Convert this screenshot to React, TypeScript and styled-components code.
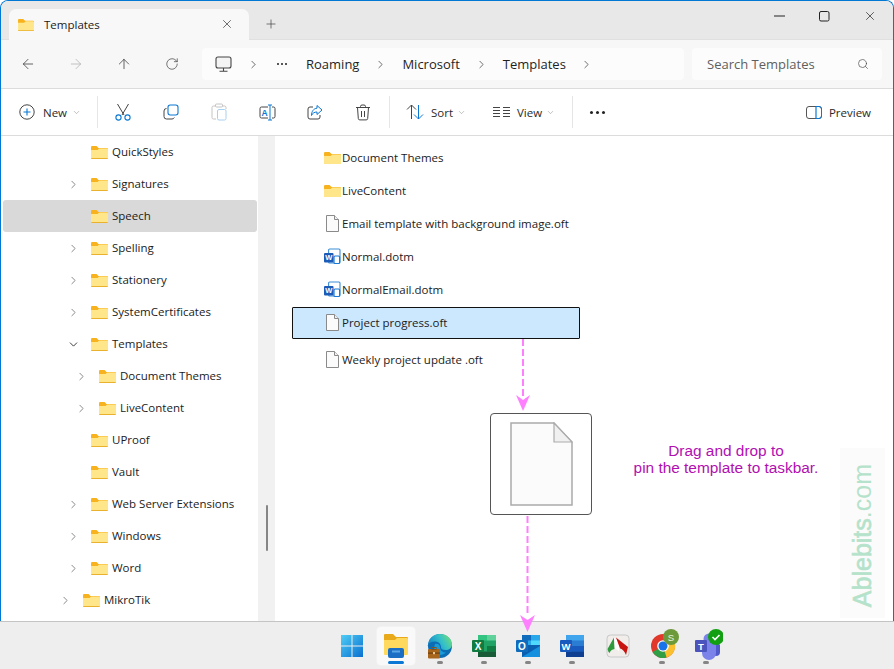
import React from "react";
import styled, { createGlobalStyle } from "styled-components";
import {
  ArrowLeft, ArrowRight, ArrowUp, RotateCw, ChevronRight, ChevronDown, X, Plus, Search,
} from "lucide-react";

const Global = createGlobalStyle`
  html, body { margin: 0; padding: 0; background: #fff; }
  body { font-family: "Open Sans", "Noto Sans", sans-serif; font-size: 11.5px; color: #1b1b1b; }
  * { box-sizing: border-box; }
`;

const Page = styled.div`
  position: relative;
  width: 894px;
  height: 669px;
  overflow: hidden;
  background: #fff;
`;
const Win = styled.div`
  height: 621px;
  display: flex;
  flex-direction: column;
  border: 1px solid #0078d4;
  border-bottom: 0;
  border-radius: 8px 8px 0 0;
  overflow: hidden;
`;
const TabStrip = styled.div`
  height: 39px;
  flex: none;
  background: #e8e8e8;
  display: flex;
  align-items: flex-end;
  padding-left: 8px;
  border-bottom: 1px solid #e0e0e0;
`;
const Tab = styled.div`
  width: 240px;
  height: 31px;
  background: #f8f8f8;
  border-radius: 7px 7px 0 0;
  display: flex;
  align-items: center;
  padding-left: 9px;
  margin-bottom: -1px;
  font-size: 11.5px;
`;
const TabTitle = styled.span`
  margin-left: 10px;
  flex: 1;
`;
const TabClose = styled.span`
  display: flex;
  margin-right: 15px;
  margin-top: -2px;
  color: #333;
`;
const NewTab = styled.div`
  margin-left: 15px;
  height: 31px;
  display: flex;
  align-items: center;
  color: #444;
`;
const WinControls = styled.div`
  margin-left: auto;
  align-self: flex-start;
  display: flex;
  padding: 7px 0 0 0;
`;
const WinBtn = styled.div`
  width: 45.5px;
  height: 16px;
  display: flex;
  align-items: center;
  justify-content: center;
`;
const AddressBar = styled.div`
  height: 49px;
  flex: none;
  background: #f7f7f7;
  border-bottom: 1px solid #dcdcdc;
  display: flex;
  align-items: center;
  padding-left: 3px;
`;
const NavBtn = styled.div<{ $off?: boolean }>`
  width: 48px;
  height: 32px;
  display: flex;
  align-items: center;
  justify-content: center;
  color: ${(p) => (p.$off ? "#b4b4b4" : "#404040")};
`;
const Crumbs = styled.div`
  margin-left: 6px;
  width: 482px;
  height: 32px;
  background: #fcfcfc;
  border-radius: 4px;
  display: flex;
  align-items: center;
  padding-left: 13px;
  font-size: 13px;
  color: #1f1f1f;
`;
const CrumbSep = styled.span<{ $w: number }>`
  width: ${(p) => p.$w}px;
  display: flex;
  justify-content: center;
  color: #444;
`;
const CrumbDots = styled.span`
  width: 14px;
  display: flex;
  justify-content: center;
  gap: 2px;
  margin-right: 17px;
`;
const Dot = styled.i<{ $s?: number }>`
  display: block;
  width: ${(p) => p.$s ?? 2}px;
  height: ${(p) => p.$s ?? 2}px;
  background: #222;
  border-radius: 50%;
`;
const SearchBox = styled.div`
  margin-left: 8px;
  width: 190px;
  height: 32px;
  background: #fcfcfc;
  border-radius: 4px;
  display: flex;
  align-items: center;
  justify-content: space-between;
  padding: 0 13px 0 15px;
  font-size: 13px;
  color: #5f5f5f;
`;
const Toolbar = styled.div`
  height: 47px;
  flex: none;
  background: #fff;
  border-bottom: 1px solid #dcdcdc;
  display: flex;
  align-items: center;
  font-size: 11.5px;
  color: #2a2a2a;
`;
const LabelBtn = styled.div<{ $w: number; $pl: number; $gap: number }>`
  width: ${(p) => p.$w}px;
  padding-left: ${(p) => p.$pl}px;
  height: 32px;
  display: flex;
  align-items: center;
  gap: ${(p) => p.$gap}px;
`;
const Caret = styled.span`
  display: flex;
  color: #8a8a8a;
  margin-left: -3px;
`;
const ToolSep = styled.div<{ $ml?: number; $mr?: number }>`
  width: 1px;
  height: 32px;
  background: #e6e6e6;
  margin-left: ${(p) => p.$ml ?? 0}px;
  margin-right: ${(p) => p.$mr ?? 0}px;
`;
const ToolIcon = styled.div`
  width: 48px;
  height: 32px;
  display: flex;
  align-items: center;
  justify-content: center;
`;
const More = styled.div`
  width: 48px;
  display: flex;
  justify-content: center;
  gap: 3px;
`;
const Preview = styled.div`
  margin-left: auto;
  padding-right: 22px;
  display: flex;
  align-items: center;
  gap: 7px;
`;
const Main = styled.div`
  flex: 1;
  min-height: 0;
  display: flex;
`;
const Tree = styled.div`
  width: 257px;
  flex: none;
  overflow: hidden;
`;
const TreeRow = styled.div<{ $depth: number; $sel?: boolean }>`
  height: 32px;
  margin: 0 1px 0 2px;
  padding-left: ${(p) => 52 + 8 * p.$depth}px;
  border-radius: 3px;
  background: ${(p) => (p.$sel ? "#d9d9d9" : "transparent")};
  display: flex;
  align-items: center;
`;
const Twisty = styled.span`
  width: 20px;
  margin-right: 8px;
  display: flex;
  justify-content: center;
  color: #777;
`;
const TwistyOpen = styled(Twisty)`
  color: #222;
`;
const TreeLabel = styled.span`
  margin-left: 4px;
  padding-bottom: 2px;
`;
const Track = styled.div`
  width: 17px;
  flex: none;
  background: #f1f1f1;
  padding-top: 369px;
  display: flex;
  justify-content: center;
`;
const Thumb = styled.div`
  width: 2px;
  height: 46px;
  background: #858585;
  border-radius: 1px;
`;
const Files = styled.div`
  flex: 1;
  padding: 5px 0 0 17px;
`;
const FileRow = styled.div<{ $sel?: boolean }>`
  width: 288px;
  height: ${(p) => (p.$sel ? 32 : 33)}px;
  padding-left: ${(p) => (p.$sel ? 30 : 31)}px;
  display: flex;
  align-items: center;
  ${(p) =>
    p.$sel
      ? `background:#cce8ff;border:1px solid #111;border-radius:1px;margin:1px 0 4px;padding-bottom:1px;`
      : ""}
`;
const FileIconSlot = styled.span`
  width: 19px;
  flex: none;
  display: flex;
  padding-right: 1px;
  justify-content: center;
`;
const Taskbar = styled.div`
  height: 48px;
  background: #eeeeee;
  border-top: 1px solid #c4c4c4;
  display: flex;
  align-items: center;
  padding-left: 330px;
`;
const TaskItem = styled.div<{ $active?: boolean; $shift?: number }>`
  position: relative;
  width: ${(p) => (p.$active ? 38 : 44)}px;
  height: 38px;
  margin: ${(p) => (p.$active ? "0 3px" : "0")};
  margin-left: ${(p) => (p.$shift !== undefined ? `${p.$shift}px` : undefined)};
  display: flex;
  align-items: center;
  justify-content: center;
  border-radius: 4px;
  ${(p) => (p.$active ? "background:#f9f9f9;box-shadow:0 0 0 1px #f2f2f2;" : "")}
`;
const Pip = styled.i<{ $active?: boolean }>`
  position: absolute;
  left: 50%;
  bottom: 1px;
  transform: translateX(-50%);
  width: ${(p) => (p.$active ? 16 : 6)}px;
  height: 3px;
  border-radius: 2px;
  background: ${(p) => (p.$active ? "#0a78d4" : "#858585")};
`;
const Arrows = styled.svg`
  position: absolute;
  left: 0;
  top: 0;
  pointer-events: none;
`;
const DragBox = styled.div`
  position: absolute;
  left: 490px;
  top: 413px;
  width: 102px;
  height: 102px;
  background: #fff;
  border: 1px solid #555;
  border-radius: 4px;
  display: flex;
  align-items: center;
  justify-content: center;
`;
const Note = styled.div`
  position: absolute;
  left: 606px;
  top: 442px;
  width: 240px;
  text-align: center;
  font: 15.4px/17px "Liberation Sans", Arial, sans-serif;
  color: #b10fb1;
`;
const Mark = styled.div`
  position: absolute;
  left: 840px;
  top: 448px;
  width: 45px;
  height: 170px;
  background: #fbfbfb;
  display: flex;
  align-items: center;
  justify-content: center;
`;
const MarkText = styled.span`
  writing-mode: vertical-rl;
  transform: rotate(180deg);
  font: 25px/1 "Liberation Sans", Arial, sans-serif;
  color: #b5e2ca;
  margin-top: 5px;
`;
const MarkBold = styled.b`
  font-weight: 400;
  -webkit-text-stroke: 0.6px #b5e2ca;
`;

const Folder = ({ w = 17 }: { w?: number }) => (
  <svg width={w} height={w * 0.82} viewBox="0 0 17 14">
    <path d="M0 2a1 1 0 0 1 1-1h4.500l2 2H16a1 1 0 0 1 1 1v2H0z" fill="#f7b21d" />
    <path d="M0 5h6.500l1.700-1.500H16a1 1 0 0 1 1 1V13a1 1 0 0 1-1 1H1a1 1 0 0 1-1-1z" fill="#ffe68a" />
    <path d="M0 13h17a1 1 0 0 1-1 1H1a1 1 0 0 1-1-1z" fill="#e9b12c" />
  </svg>
);
const DocIcon = () => (
  <svg width="13" height="17" viewBox="0 0 13 17">
    <path d="M.5.5h8l4 4v12H.5z" fill="#fbfbfb" stroke="#8a8a8a" />
    <path d="M8.500.5v4h4" fill="#f0f0f0" stroke="#8a8a8a" />
  </svg>
);
const WordDoc = () => (
  <svg width="17" height="17" viewBox="0 0 17 17">
    <rect x="4.600" y="1" width="11.400" height="14" rx="1" fill="#fff" stroke="#3b8ed6" strokeWidth="1.100" />
    <rect x="10" y="8" width="5.600" height="7.500" rx="1" fill="#fff" stroke="#1a7ad4" strokeWidth="1.200" />
    <rect x="0" y="5" width="9.500" height="9.500" rx="1" fill="#1c5cb8" />
    <text x="4.700" y="12.400" textAnchor="middle" fontSize="7.500" fontWeight="700" fontFamily="Liberation Sans" fill="#fff">W</text>
  </svg>
);

const tree: { n: string; d: number; t?: "c" | "o"; sel?: boolean }[] = [
  { n: "QuickStyles", d: 1 },
  { n: "Signatures", d: 1, t: "c" },
  { n: "Speech", d: 1, sel: true },
  { n: "Spelling", d: 1, t: "c" },
  { n: "Stationery", d: 1, t: "c" },
  { n: "SystemCertificates", d: 1, t: "c" },
  { n: "Templates", d: 1, t: "o" },
  { n: "Document Themes", d: 2, t: "c" },
  { n: "LiveContent", d: 2, t: "c" },
  { n: "UProof", d: 1 },
  { n: "Vault", d: 1 },
  { n: "Web Server Extensions", d: 1, t: "c" },
  { n: "Windows", d: 1, t: "c" },
  { n: "Word", d: 1, t: "c" },
  { n: "MikroTik", d: 0, t: "c" },
];
const files: { n: string; k: "f" | "d" | "w"; sel?: boolean }[] = [
  { n: "Document Themes", k: "f" },
  { n: "LiveContent", k: "f" },
  { n: "Email template with background image.oft", k: "d" },
  { n: "Normal.dotm", k: "w" },
  { n: "NormalEmail.dotm", k: "w" },
  { n: "Project progress.oft", k: "d", sel: true },
  { n: "Weekly project update .oft", k: "d" },
];

const Sep = ({ w }: { w: number }) => (
  <CrumbSep $w={w}><ChevronRight size={13} strokeWidth={1.4} /></CrumbSep>
);

export default function App() {
  return (
    <Page>
      <Global />
      <Win>
        <TabStrip>
          <Tab>
            <Folder w={16} />
            <TabTitle>Templates</TabTitle>
            <TabClose><X size={14} strokeWidth={1.2} /></TabClose>
          </Tab>
          <NewTab><Plus size={14} strokeWidth={1.2} /></NewTab>
          <WinControls>
            <WinBtn><svg width="11" height="2"><rect width="11" height="1" y="0.5" fill="#222" /></svg></WinBtn>
            <WinBtn><svg width="11" height="11"><rect x=".5" y=".5" width="9.500" height="9.500" rx="1.500" fill="none" stroke="#222" /></svg></WinBtn>
            <WinBtn><X size={14} strokeWidth={1.2} color="#222" /></WinBtn>
          </WinControls>
        </TabStrip>
        <AddressBar>
          <NavBtn><ArrowLeft size={16} strokeWidth={1.2} /></NavBtn>
          <NavBtn $off><ArrowRight size={16} strokeWidth={1.2} /></NavBtn>
          <NavBtn><ArrowUp size={16} strokeWidth={1.2} /></NavBtn>
          <NavBtn><RotateCw size={14} strokeWidth={1.2} /></NavBtn>
          <Crumbs>
            <svg width="17" height="17" viewBox="0 0 17 17">
              <rect x="1" y="1" width="15" height="11" rx="2" fill="#f4f4f4" stroke="#444" strokeWidth="1.100" />
              <path d="M8.500 12v3M4.500 15.200h8" stroke="#444" strokeWidth="1.100" />
            </svg>
            <Sep w={43} />
            <CrumbDots><Dot /><Dot /><Dot /></CrumbDots>
            <span>Roaming</span>
            <Sep w={43} />
            <span>Microsoft</span>
            <Sep w={43} />
            <span>Templates</span>
            <Sep w={42} />
          </Crumbs>
          <SearchBox>
            Search Templates
            <Search size={12} strokeWidth={1.3} color="#444" />
          </SearchBox>
        </AddressBar>
        <Toolbar>
          <LabelBtn $w={96} $pl={18} $gap={8}>
            <svg width="16" height="16" viewBox="0 0 16 16">
              <circle cx="8" cy="8" r="7.200" fill="none" stroke="#444" strokeWidth="1" />
              <path d="M8 4.500v7M4.500 8h7" stroke="#0a78d4" strokeWidth="1.100" />
            </svg>
            New
            <Caret><ChevronDown size={9} strokeWidth={1.4} /></Caret>
          </LabelBtn>
          <ToolSep $mr={1} />
          <ToolIcon>
            <svg width="16" height="18" viewBox="0 0 16 18" fill="none">
              <path d="M2.500 1l6.500 11M13.500 1L7 12" stroke="#444" strokeWidth="1" />
              <circle cx="3.500" cy="14.500" r="2.600" stroke="#0a78d4" strokeWidth="1.100" />
              <circle cx="12.500" cy="14.500" r="2.600" stroke="#0a78d4" strokeWidth="1.100" />
            </svg>
          </ToolIcon>
          <ToolIcon>
            <svg width="16" height="16" viewBox="0 0 16 16" fill="none">
              <rect x="5" y="1" width="10" height="10" rx="2.200" stroke="#0a78d4" strokeWidth="1.100" />
              <path d="M3.500 4.500A2.500 2.500 0 0 0 1 7v5.500A2.500 2.500 0 0 0 3.500 15H9a2.500 2.500 0 0 0 2.300-1.500" stroke="#444" strokeWidth="1" />
            </svg>
          </ToolIcon>
          <ToolIcon>
            <svg width="16" height="18" viewBox="0 0 16 18" fill="none">
              <path d="M4.500 3H2.500A1.500 1.500 0 0 0 1 4.500v10A1.500 1.500 0 0 0 2.500 16H5M11.500 3h2A1.500 1.500 0 0 1 15 4.500V6" stroke="#c4c4c4" />
              <rect x="4.500" y="1" width="7" height="3" rx="1" stroke="#c4c4c4" />
              <rect x="6.500" y="6.500" width="8.500" height="10.500" rx="1.500" stroke="#a8d0f0" />
            </svg>
          </ToolIcon>
          <ToolIcon>
            <svg width="17" height="17" viewBox="0 0 17 17" fill="none">
              <path d="M9 3H2.500A1.500 1.500 0 0 0 1 4.500v8A1.500 1.500 0 0 0 2.500 14H9M13 3h1.500A1.500 1.500 0 0 1 16 4.500v8a1.500 1.500 0 0 1-1.500 1.500H13" stroke="#444" />
              <path d="M11 1v15M9 1h4M9 16h4" stroke="#0a78d4" />
              <text x="5.500" y="12" textAnchor="middle" fontSize="8.500" fontFamily="Liberation Sans" fontWeight="700" fill="#0a78d4">A</text>
            </svg>
          </ToolIcon>
          <ToolIcon>
            <svg width="16" height="16" viewBox="0 0 16 16" fill="none">
              <path d="M6 3H3a2 2 0 0 0-2 2v8a2 2 0 0 0 2 2h8a2 2 0 0 0 2-2v-2" stroke="#444" />
              <path d="M10 1.500L15 6l-5 4.500V8C7.500 8 5.500 9 4.500 11.500 4.500 7.500 6.500 4.500 10 4.200z" stroke="#0a78d4" />
            </svg>
          </ToolIcon>
          <ToolIcon>
            <svg width="16" height="17" viewBox="0 0 16 17" fill="none" stroke="#444">
              <path d="M1 3.500h14M5.500 3.500V2.500A1.500 1.500 0 0 1 7 1h2a1.500 1.500 0 0 1 1.500 1.500v1" />
              <path d="M2.500 3.500l.8 11a1.500 1.500 0 0 0 1.500 1.400h6.400a1.500 1.500 0 0 0 1.500-1.400l.8-11" />
              <path d="M6.500 7v6M9.500 7v6" />
            </svg>
          </ToolIcon>
          <ToolSep $ml={2} />
          <LabelBtn $w={92} $pl={16} $gap={7}>
            <svg width="18" height="16" viewBox="0 0 18 16" fill="none">
              <path d="M5.500 15V1M1 5.500L5.500 1 10 5.500" stroke="#444" />
              <path d="M12.500 1v14M8 10.500l4.500 4.500 4.500-4.500" stroke="#0a78d4" />
            </svg>
            Sort
            <Caret><ChevronDown size={9} strokeWidth={1.4} /></Caret>
          </LabelBtn>
          <LabelBtn $w={90} $pl={11} $gap={7}>
            <svg width="17" height="12" viewBox="0 0 17 12" stroke="#444">
              <path d="M0 1.500h7M0 4.500h7M0 7.500h7M0 10.500h7M10 1.500h7M10 4.500h7M10 7.500h7M10 10.500h7" />
            </svg>
            View
            <Caret><ChevronDown size={9} strokeWidth={1.4} /></Caret>
          </LabelBtn>
          <ToolSep />
          <More><Dot $s={3} /><Dot $s={3} /><Dot $s={3} /></More>
          <Preview>
            <svg width="16" height="13" viewBox="0 0 16 13" fill="none">
              <rect x=".5" y=".5" width="15" height="12" rx="2.500" stroke="#555" />
              <path d="M10 .5v12" stroke="#0a78d4" strokeWidth="1.200" />
              <path d="M10 .5h3A2.500 2.500 0 0 1 15.500 3v7a2.500 2.500 0 0 1-2.500 2.500h-3" stroke="#0a78d4" />
            </svg>
            Preview
          </Preview>
        </Toolbar>
        <Main>
          <Tree>
            {tree.map((r) => (
              <TreeRow key={r.n} $depth={r.d} $sel={r.sel}>
                {r.t === "o" ? (
                  <TwistyOpen><ChevronDown size={13} strokeWidth={1.6} /></TwistyOpen>
                ) : (
                  <Twisty>{r.t === "c" ? <ChevronRight size={13} strokeWidth={1.6} /> : null}</Twisty>
                )}
                <Folder />
                <TreeLabel>{r.n}</TreeLabel>
              </TreeRow>
            ))}
          </Tree>
          <Track><Thumb /></Track>
          <Files>
            {files.map((f) => (
              <FileRow key={f.n} $sel={f.sel}>
                <FileIconSlot>
                  {f.k === "f" ? <Folder /> : f.k === "w" ? <WordDoc /> : <DocIcon />}
                </FileIconSlot>
                {f.n}
              </FileRow>
            ))}
          </Files>
        </Main>
      </Win>
      <Taskbar>
        <TaskItem>
          <svg width="24" height="24" viewBox="0 0 24 24">
            <defs>
              <linearGradient id="st" x1="0" y1="0" x2="1" y2="1">
                <stop offset="0" stopColor="#4fcdf5" /><stop offset="1" stopColor="#0a6fd0" />
              </linearGradient>
            </defs>
            <path d="M1 1h10.500v10.500H1zM12.500 1H23v10.500H12.500zM1 12.500h10.500V23H1zM12.500 12.500H23V23H12.500z" fill="url(#st)" />
          </svg>
        </TaskItem>
        <TaskItem $active>
          <svg width="26" height="28" viewBox="0 0 26 28">
            <path d="M1 3a1 1 0 0 1 1-1h8l3 3h11a1 1 0 0 1 1 1v3H1z" fill="#e8a91a" />
            <path d="M1 8h11l2-2h10a1 1 0 0 1 1 1v15a1 1 0 0 1-1 1H2a1 1 0 0 1-1-1z" fill="#ffd95e" />
            <rect x="5" y="16" width="16" height="10" rx="2" fill="#1a6fc4" />
            <rect x="9" y="18.500" width="8" height="2" fill="#5aa6e6" />
          </svg>
          <Pip $active />
        </TaskItem>
        <TaskItem>
          <svg width="26" height="26" viewBox="0 0 26 26">
            <defs>
              <linearGradient id="eg" x1="0" y1="0.700" x2="1" y2="0.300">
                <stop offset="0" stopColor="#0f7fc8" /><stop offset="0.600" stopColor="#35c1c8" /><stop offset="1" stopColor="#6fdc7a" />
              </linearGradient>
            </defs>
            <circle cx="13" cy="13" r="12" fill="#0c6cb4" />
            <path d="M1 13C1 5 7 1 13 1c7 0 12 5 12 10.500 0 3.500-3 5.500-6.500 5.500-3 0-4.500-1-4.500-2.500 0-4-3-6-6-6-4 0-6.500 2-7.500 4.500z" fill="url(#eg)" />
            <path d="M8 11c3-1 5 1 5 3.500 0 3 3 5 6 5-3 3-9 4-11-1-1-2-1-5 0-7.500z" fill="#1a9ad8" />
            <rect x="1" y="16" width="12" height="9.500" rx="1" fill="#a8651c" />
            <rect x="5" y="14.500" width="4" height="2" fill="none" stroke="#8a5214" />
            <rect x="1" y="19.500" width="12" height="1.200" fill="#6e3f0f" />
            <rect x="6" y="19" width="2" height="2.200" fill="#e8c890" />
          </svg>
          <Pip />
        </TaskItem>
        <TaskItem>
          <svg width="24" height="22" viewBox="0 0 24 22">
            <rect x="6" y="0" width="18" height="22" rx="1" fill="#21a366" />
            <rect x="6" y="0" width="9" height="5.500" fill="#33c481" />
            <rect x="15" y="0" width="9" height="5.500" fill="#5fd29b" />
            <rect x="15" y="11" width="9" height="5.500" fill="#107c41" />
            <rect x="6" y="16.500" width="18" height="5.500" fill="#185c37" />
            <rect x="0" y="5" width="12" height="12" rx="1" fill="#107c41" />
            <text x="6" y="14.500" textAnchor="middle" fontSize="10" fontWeight="700" fontFamily="Liberation Sans" fill="#fff">X</text>
          </svg>
          <Pip />
        </TaskItem>
        <TaskItem>
          <svg width="24" height="22" viewBox="0 0 24 22">
            <rect x="6" y="0" width="18" height="11" fill="#28a8ea" />
            <rect x="6" y="0" width="9" height="5.500" fill="#0f6cbd" />
            <rect x="15" y="5.500" width="9" height="5.500" fill="#50d9ff" />
            <path d="M6 10l18 0v11a1 1 0 0 1-1 1H6z" fill="#0a5fb0" />
            <path d="M6 22l18-11v10a1 1 0 0 1-1 1z" fill="#1490df" />
            <rect x="0" y="5" width="12" height="12" rx="1" fill="#0f6cbd" />
            <text x="6" y="14.500" textAnchor="middle" fontSize="10" fontWeight="700" fontFamily="Liberation Sans" fill="#fff">O</text>
          </svg>
          <Pip />
        </TaskItem>
        <TaskItem>
          <svg width="24" height="22" viewBox="0 0 24 22">
            <rect x="6" y="0" width="18" height="22" rx="1" fill="#2b7cd3" />
            <rect x="6" y="0" width="18" height="5.500" fill="#41a5ee" />
            <rect x="6" y="11" width="18" height="5.500" fill="#185abd" />
            <rect x="6" y="16.500" width="18" height="5.500" fill="#103f91" />
            <rect x="0" y="5" width="12" height="12" rx="1" fill="#185abd" />
            <text x="6" y="14.500" textAnchor="middle" fontSize="9.500" fontWeight="700" fontFamily="Liberation Sans" fill="#fff">W</text>
          </svg>
          <Pip />
        </TaskItem>
        <TaskItem $shift={2}>
          <svg width="24" height="24" viewBox="0 0 24 24">
            <rect x="1" y="1" width="22" height="22" rx="3.500" fill="#f0edeb" stroke="#c8c8c8" />
            <path d="M8 3.500L1.500 15c.5 2 1 3 2 4 1-2.500 2.500-3.500 5-4z" fill="#2e9a3c" />
            <path d="M8 3.500l1 11.500c2 0 3 1 3.500 2.500L15 9z" fill="#fff" />
            <path d="M10 3.500L22 13l-2 8c-1-3-3.500-6-6-6.500z" fill="#c8140f" />
          </svg>
        </TaskItem>
        <TaskItem>
          <svg width="34" height="34" viewBox="0 0 34 34">
            <circle cx="18" cy="17" r="12" fill="#e0392c" />
            <path d="M18 17L7.500 23a12 12 0 0 0 14 5.500z" fill="#2f9e44" />
            <path d="M18 17l3.500 11.500A12 12 0 0 0 29.500 13z" fill="#fbc02d" />
            <circle cx="18" cy="17" r="5.800" fill="#fff" />
            <circle cx="18" cy="17" r="4.500" fill="#1a73e8" />
            <circle cx="26" cy="8" r="8" fill="#6c9a3a" />
            <text x="26" y="11.500" textAnchor="middle" fontSize="9.500" fontFamily="Liberation Sans" fill="#e8f4d8">S</text>
          </svg>
          <Pip />
        </TaskItem>
        <TaskItem>
          <svg width="34" height="34" viewBox="0 0 34 34">
            <circle cx="20" cy="10" r="5.500" fill="#7b83eb" />
            <circle cx="27" cy="15" r="3.500" fill="#5059c9" />
            <path d="M23 16h8v7a4 4 0 0 1-8 0z" fill="#5059c9" />
            <path d="M13 15h14v9a7 7 0 0 1-14 0z" fill="#7b83eb" />
            <rect x="6" y="11" width="12" height="12" rx="1" fill="#4b53bc" />
            <text x="12" y="20.500" textAnchor="middle" fontSize="9.500" fontWeight="700" fontFamily="Liberation Sans" fill="#fff">T</text>
            <circle cx="27" cy="8" r="8" fill="#12a012" />
            <path d="M23.500 8l2.500 2.500L30.500 6" fill="none" stroke="#fff" strokeWidth="1.600" />
          </svg>
          <Pip />
        </TaskItem>
      </Taskbar>

      <DragBox>
        <svg width="63" height="84" viewBox="0 0 63 84">
          <path d="M1 1h43l18 19v63H1z" fill="#fbfbfb" stroke="#ababab" strokeWidth="1.500" />
          <path d="M44 1v19h18z" fill="#f0f0f0" stroke="#ababab" strokeWidth="1.200" />
        </svg>
      </DragBox>
      <Note>Drag and drop to<br />pin the template to taskbar.</Note>
      <Mark>
        <MarkText><MarkBold>Ablebits</MarkBold>.com</MarkText>
      </Mark>
      <Arrows width="894" height="669" viewBox="0 0 894 669">
        <path d="M523 339V396" stroke="#ff80ff" strokeWidth="2" strokeDasharray="7 3" fill="none" />
        <path d="M516 395l7 5 7-5-7 16z" fill="#ff80ff" />
        <path d="M527.500 516V616" stroke="#ff80ff" strokeWidth="2" strokeDasharray="7 3" fill="none" />
        <path d="M520 615l7.500 5 7.500-5-7.500 17z" fill="#ff80ff" />
      </Arrows>
    </Page>
  );
}
